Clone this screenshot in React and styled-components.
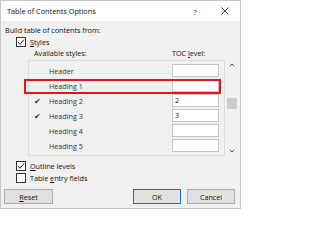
import React from "react";
import styled, { createGlobalStyle } from "styled-components";

const Global = createGlobalStyle`
  html, body { margin: 0; padding: 0; background: #fff; }
  * { box-sizing: border-box; }
`;

const Window = styled.div`
  width: 241px;
  height: 209px;
  border: 1px solid #c8c8c8;
  background: #f0f0f0;
  font-family: "Open Sans", "Noto Sans", Arial, sans-serif;
  font-size: 7.2px;
  color: #111;
  display: flex;
  flex-direction: column;
  overflow: hidden;
`;

const TitleBar = styled.div`
  height: 20px;
  background: #fff;
  display: flex;
  align-items: center;
  padding-left: 6px;
  flex: none;
`;

const Title = styled.div`
  flex: 1;
  font-size: 7.3px;
  color: #111;
`;

const TitleButton = styled.div`
  width: 30px;
  height: 20px;
  display: flex;
  align-items: center;
  justify-content: center;
  color: #333;
  font-size: 8px;
`;

const Body = styled.div`
  padding: 3px 3px 0 3px;
  display: flex;
  flex-direction: column;
`;

const Line = styled.div`
  height: ${(p) => p.$h || 12}px;
  line-height: ${(p) => p.$h || 12}px;
  margin-left: ${(p) => p.$indent || 0}px;
  margin-top: ${(p) => p.$mt || 0}px;
  white-space: nowrap;
`;

const CheckRow = styled.label`
  display: flex;
  align-items: center;
  gap: 4px;
  height: 10px;
  margin-left: ${(p) => p.$indent || 0}px;
  margin-top: ${(p) => p.$mt || 0}px;
  white-space: nowrap;
`;

const Box = styled.span`
  width: 10px;
  height: 10px;
  border: 1px solid #333;
  background: #fff;
  display: flex;
  align-items: center;
  justify-content: center;
  flex: none;
`;

const U = styled.span`
  text-decoration: underline;
  text-underline-offset: 1px;
`;

const ColumnHeads = styled.div`
  display: flex;
  height: 10px;
  line-height: 10px;
  margin-top: 1px;
  margin-left: 30px;
`;

const HeadName = styled.div`
  width: 138px;
`;

const ListArea = styled.div`
  display: flex;
  margin-left: 24px;
  margin-top: 2px;
`;

const List = styled.div`
  width: 198px;
  height: 96px;
  border: 1px solid #dcdcdc;
  background: #f0f0f0;
  padding-top: 2px;
  display: flex;
  flex-direction: column;
`;

const Row = styled.div`
  position: relative;
  height: 15px;
  display: flex;
  align-items: center;
  color: #333;
`;

const Check = styled.div`
  width: 20px;
  padding-left: 5px;
  font-size: 8px;
`;

const Name = styled.div`
  width: 123px;
`;

const Input = styled.div`
  width: 47px;
  height: 13px;
  border: 1px solid #c4c4c4;
  background: #fff;
  padding-left: 2px;
  line-height: 11px;
  color: #222;
`;

const Highlight = styled.div`
  position: absolute;
  left: -5px;
  right: 3px;
  top: 1px;
  height: 15px;
  border: 2px solid #e8151f;
  pointer-events: none;
`;

const ScrollBar = styled.div`
  width: 12px;
  height: 96px;
  display: flex;
  flex-direction: column;
  align-items: center;
  padding: 3px 0 3px 1px;
`;

const Thumb = styled.div`
  width: 10px;
  height: 11px;
  background: #cdcdcd;
  margin-top: 31px;
`;

const Spacer = styled.div`
  flex: 1;
`;

const Buttons = styled.div`
  display: flex;
  margin-top: 6px;
`;

const Button = styled.div`
  width: ${(p) => p.$w || 48}px;
  height: 15px;
  background: #e1e1e1;
  border: 1px solid ${(p) => (p.$primary ? "#0078d7" : "#adadad")};
  display: flex;
  align-items: center;
  justify-content: center;
  margin-left: ${(p) => p.$ml || 0}px;
  color: #111;
`;

const Tick = () => (
  <svg width="8" height="8" viewBox="0 0 8 8">
    <path d="M1 4.2 L3.1 6.3 L7 1.5" stroke="#222" strokeWidth="1" fill="none" />
  </svg>
);

const Chevron = ({ up }) => (
  <svg width="6" height="4" viewBox="0 0 6 4">
    <path
      d={up ? "M0.8 3.3 L3 1 L5.2 3.3" : "M0.8 0.8 L3 3 L5.2 0.8"}
      stroke="#555"
      strokeWidth="1"
      fill="none"
    />
  </svg>
);

const rows = [
  { name: "Header", check: false, level: "" },
  { name: "Heading 1", check: false, level: "", hl: true },
  { name: "Heading 2", check: true, level: "2" },
  { name: "Heading 3", check: true, level: "3" },
  { name: "Heading 4", check: false, level: "" },
  { name: "Heading 5", check: false, level: "" },
];

export default function App() {
  return (
    <>
      <Global />
      <Window>
        <TitleBar>
          <Title>Table of Contents Options</Title>
          <TitleButton>?</TitleButton>
          <TitleButton>
            <svg width="8" height="8" viewBox="0 0 8 8">
              <path d="M0.5 0.5 L7.5 7.5 M7.5 0.5 L0.5 7.5" stroke="#333" strokeWidth="0.9" />
            </svg>
          </TitleButton>
        </TitleBar>
        <Body>
          <Line $indent={1}>Build table of contents from:</Line>
          <CheckRow $indent={12} $mt={1}>
            <Box><Tick /></Box>
            <span><U>S</U>tyles</span>
          </CheckRow>
          <ColumnHeads>
            <HeadName>Available styles:</HeadName>
            <div>TOC <U>l</U>evel:</div>
          </ColumnHeads>
          <ListArea>
            <List>
              {rows.map((r) => (
                <Row key={r.name}>
                  <Check>{r.check ? "✔" : ""}</Check>
                  <Name>{r.name}</Name>
                  <Input>{r.level}</Input>
                  {r.hl && <Highlight />}
                </Row>
              ))}
            </List>
            <ScrollBar>
              <Chevron up />
              <Thumb />
              <Spacer />
              <Chevron />
            </ScrollBar>
          </ListArea>
          <CheckRow $indent={12} $mt={5}>
            <Box><Tick /></Box>
            <span><U>O</U>utline levels</span>
          </CheckRow>
          <CheckRow $indent={12} $mt={2}>
            <Box />
            <span>Table <U>e</U>ntry fields</span>
          </CheckRow>
          <Buttons>
            <Button $w={49}><span><U>R</U>eset</span></Button>
            <Button $w={48} $ml={80} $primary>OK</Button>
            <Button $w={48} $ml={6}>Cancel</Button>
          </Buttons>
        </Body>
      </Window>
    </>
  );
}
